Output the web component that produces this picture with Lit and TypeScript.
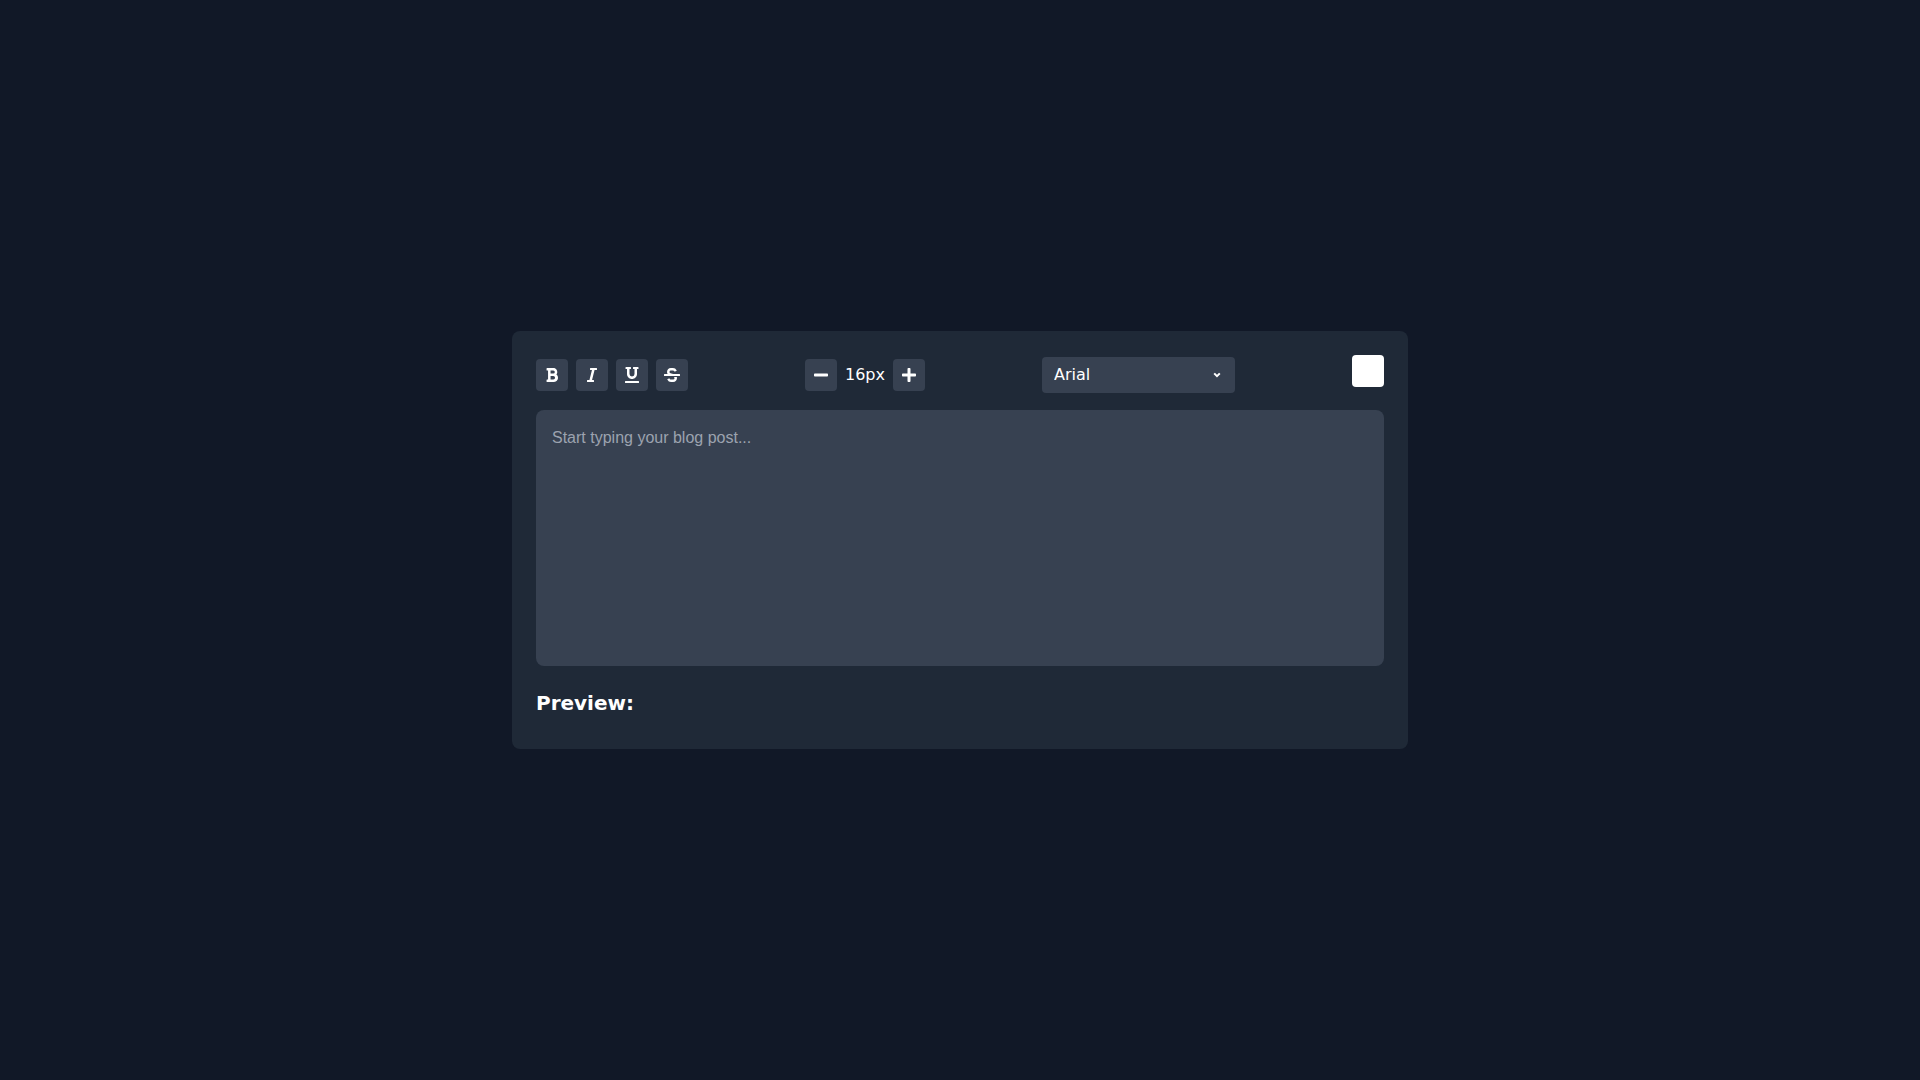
import { LitElement, html, css } from "lit";
import { customElement, state } from "lit/decorators.js";
import { classMap } from "lit/directives/class-map.js";
import { styleMap } from "lit/directives/style-map.js";

interface Icon {
  viewBox: string;
  path: string;
}

const ICONS: Record<string, Icon> = {
  bold: {
    viewBox: "0 0 384 512",
    path: "M333.49 238a122 122 0 0 0 27-65.21C367.87 96.49 308 32 233.42 32H34a16 16 0 0 0-16 16v48a16 16 0 0 0 16 16h31.87v288H34a16 16 0 0 0-16 16v48a16 16 0 0 0 16 16h209.32c70.8 0 134.14-51.75 141-122.4 4.74-48.45-16.39-92.06-50.83-119.6zM145.66 112h87.76a48 48 0 0 1 0 96h-87.76zm87.76 288h-87.76V288h87.76a56 56 0 0 1 0 112z",
  },
  italic: {
    viewBox: "0 0 320 512",
    path: "M320 48v32a16 16 0 0 1-16 16h-62.76l-80 320H208a16 16 0 0 1 16 16v32a16 16 0 0 1-16 16H16a16 16 0 0 1-16-16v-32a16 16 0 0 1 16-16h62.76l80-320H112a16 16 0 0 1-16-16V48a16 16 0 0 1 16-16h192a16 16 0 0 1 16 16z",
  },
  underline: {
    viewBox: "0 0 448 512",
    path: "M32 64h32v160c0 88.22 71.78 160 160 160s160-71.78 160-160V64h32a16 16 0 0 0 16-16V16a16 16 0 0 0-16-16H272a16 16 0 0 0-16 16v32a16 16 0 0 0 16 16h32v160a80 80 0 0 1-160 0V64h32a16 16 0 0 0 16-16V16a16 16 0 0 0-16-16H32a16 16 0 0 0-16 16v32a16 16 0 0 0 16 16zm400 384H16a16 16 0 0 0-16 16v32a16 16 0 0 0 16 16h416a16 16 0 0 0 16-16v-32a16 16 0 0 0-16-16z",
  },
  strikethrough: {
    viewBox: "0 0 512 512",
    path: "M496 224H293.88l-87.17-26.83A43.55 43.55 0 0 1 219.55 112h66.79A49.89 49.89 0 0 1 331 139.58a16 16 0 0 0 21.46 7.15l42.94-21.47a16 16 0 0 0 7.16-21.46l-.53-1A128 128 0 0 0 287.51 32h-68a123.68 123.68 0 0 0-123 135.64c2 20.89 10.1 39.83 21.78 56.36H16a16 16 0 0 0-16 16v32a16 16 0 0 0 16 16h480a16 16 0 0 0 16-16v-32a16 16 0 0 0-16-16zm-180.24 96A43 43 0 0 1 336 356.45 43.59 43.59 0 0 1 292.45 400h-66.79A49.89 49.89 0 0 1 181 372.42a16 16 0 0 0-21.46-7.15l-42.94 21.47a16 16 0 0 0-7.16 21.46l.53 1A128 128 0 0 0 224.49 480h68a123.68 123.68 0 0 0 123-135.64 114.25 114.25 0 0 0-5.34-24.36z",
  },
  minus: {
    viewBox: "0 0 448 512",
    path: "M416 208H32c-17.67 0-32 14.33-32 32v32c0 17.67 14.33 32 32 32h384c17.67 0 32-14.33 32-32v-32c0-17.67-14.33-32-32-32z",
  },
  plus: {
    viewBox: "0 0 448 512",
    path: "M416 208H272V64c0-17.67-14.33-32-32-32h-32c-17.67 0-32 14.33-32 32v144H32c-17.67 0-32 14.33-32 32v32c0 17.67 14.33 32 32 32h144v144c0 17.67 14.33 32 32 32h32c17.67 0 32-14.33 32-32V304h144c17.67 0 32-14.33 32-32v-32c0-17.67-14.33-32-32-32z",
  },
};

const FORMATS = ["bold", "italic", "underline", "strikethrough"] as const;
type Format = (typeof FORMATS)[number];

const FONTS = ["Arial", "Helvetica", "Times New Roman", "Courier New", "Verdana"];

@customElement("app-root")
export class AppRoot extends LitElement {
  static styles = css`
    :host {
      display: flex;
      align-items: center;
      justify-content: center;
      min-height: 100vh;
      background: #111827;
      color: #ffffff;
      font-family: "DejaVu Sans", sans-serif;
      font-size: 16px;
      line-height: 24px;
    }
    *,
    *::before,
    *::after {
      box-sizing: border-box;
    }
    .card {
      width: 100%;
      max-width: 896px;
      padding: 24px;
      border-radius: 8px;
      background: #1f2937;
    }
    .toolbar {
      display: flex;
      align-items: center;
      justify-content: space-between;
      margin-bottom: 16px;
    }
    .group {
      display: flex;
      align-items: center;
      gap: 8px;
    }
    .tool {
      display: block;
      padding: 8px;
      border: 0;
      border-radius: 4px;
      background: #374151;
      color: inherit;
      cursor: pointer;
    }
    .tool.active {
      background: #4b5563;
    }
    .icon {
      display: block;
      width: 16px;
      height: 16px;
      fill: currentColor;
    }
    .picker {
      display: grid;
      align-items: center;
    }
    .font {
      grid-area: 1 / 1;
      appearance: none;
      width: 193px;
      height: 36px;
      padding: 0 32px 0 12px;
      border: 0;
      border-radius: 4px;
      background: #374151;
      color: inherit;
      font: inherit;
    }
    .chevron {
      grid-area: 1 / 1;
      justify-self: end;
      width: 12px;
      height: 12px;
      margin-right: 12px;
      fill: none;
      stroke: currentColor;
      stroke-width: 2;
      pointer-events: none;
    }
    .swatch {
      padding-bottom: 7px;
    }
    .color {
      display: block;
      appearance: none;
      width: 32px;
      height: 32px;
      padding: 0;
      border: 0;
      border-radius: 4px;
      overflow: hidden;
      background: none;
      cursor: pointer;
    }
    .color::-webkit-color-swatch-wrapper {
      padding: 0;
    }
    .color::-webkit-color-swatch {
      border: 0;
    }
    .editor {
      display: block;
      width: 100%;
      height: 256px;
      padding: 16px;
      border: 0;
      border-radius: 8px;
      outline: none;
      resize: none;
      background: #374151;
      color: inherit;
      font-size: 16px;
      line-height: 24px;
    }
    .editor::placeholder {
      color: #9ca3af;
    }
    .heading {
      margin: 23px 0 8px;
      font-size: 20px;
      font-weight: 700;
      line-height: 28px;
    }
    .preview {
      white-space: pre-wrap;
      overflow-wrap: anywhere;
    }
  `;

  @state() private active: Record<Format, boolean> = {
    bold: false,
    italic: false,
    underline: false,
    strikethrough: false,
  };
  @state() private size = 16;
  @state() private font = "Arial";
  @state() private color = "#ffffff";
  @state() private text = "";

  private toggle(format: Format) {
    this.active = { ...this.active, [format]: !this.active[format] };
  }

  private resize(step: number) {
    this.size = Math.max(8, Math.min(72, this.size + step));
  }

  private get textStyle() {
    const lines = [
      this.active.underline ? "underline" : "",
      this.active.strikethrough ? "line-through" : "",
    ].filter(Boolean);
    return {
      fontFamily: `"${this.font}", "Liberation Sans", sans-serif`,
      fontSize: `${this.size}px`,
      lineHeight: "1.5",
      color: this.color,
      fontWeight: this.active.bold ? "700" : "400",
      fontStyle: this.active.italic ? "italic" : "normal",
      textDecoration: lines.join(" ") || "none",
    };
  }

  private icon(name: string) {
    const { viewBox, path } = ICONS[name];
    return html`<svg class="icon" viewBox=${viewBox} aria-hidden="true"><path d=${path}></path></svg>`;
  }

  render() {
    return html`
      <main class="card">
        <div class="toolbar">
          <div class="group">
            ${FORMATS.map(
              (format) => html`<button
                type="button"
                class=${classMap({ tool: true, active: this.active[format] })}
                aria-label=${format}
                aria-pressed=${this.active[format] ? "true" : "false"}
                @click=${() => this.toggle(format)}
              >${this.icon(format)}</button>`
            )}
          </div>
          <div class="group">
            <button type="button" class="tool" aria-label="Decrease font size" @click=${() => this.resize(-1)}>
              ${this.icon("minus")}
            </button>
            <span>${this.size}px</span>
            <button type="button" class="tool" aria-label="Increase font size" @click=${() => this.resize(1)}>
              ${this.icon("plus")}
            </button>
          </div>
          <div class="picker">
            <select
              class="font"
              aria-label="Font family"
              @change=${(e: Event) => (this.font = (e.target as HTMLSelectElement).value)}
            >
              ${FONTS.map((name) => html`<option ?selected=${name === this.font}>${name}</option>`)}
            </select>
            <svg class="chevron" viewBox="0 0 12 12" aria-hidden="true">
              <path d="M3.2 4.4L6 7.2l2.8-2.8"></path>
            </svg>
          </div>
          <div class="swatch">
            <input
              class="color"
              type="color"
              aria-label="Text color"
              .value=${this.color}
              @input=${(e: Event) => (this.color = (e.target as HTMLInputElement).value)}
            />
          </div>
        </div>
        <textarea
          class="editor"
          aria-label="Blog post"
          placeholder="Start typing your blog post..."
          style=${styleMap(this.textStyle)}
          .value=${this.text}
          @input=${(e: Event) => (this.text = (e.target as HTMLTextAreaElement).value)}
        ></textarea>
        <h2 class="heading">Preview:</h2>
        <div class="preview" style=${styleMap(this.textStyle)}>${this.text}</div>
      </main>
    `;
  }
}
